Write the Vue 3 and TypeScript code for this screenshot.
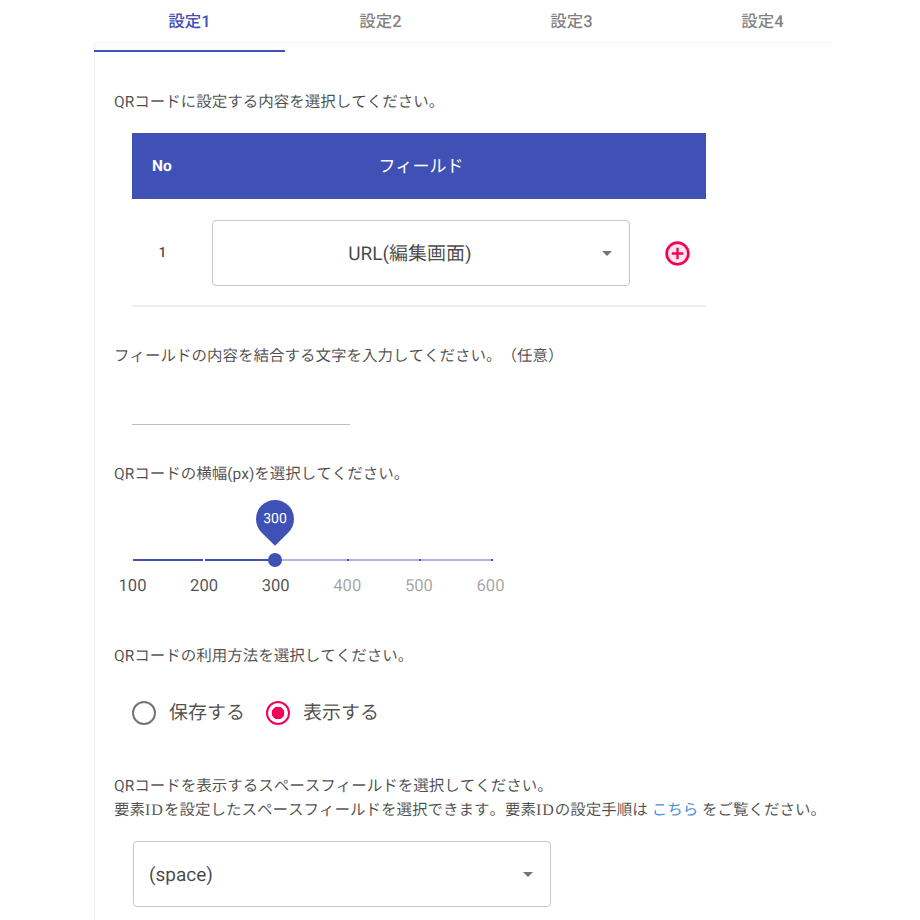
<script setup lang="ts">
const tabs = ['設定1', '設定2', '設定3', '設定4']
const ticks = [
  { label: '100', on: true },
  { label: '200', on: true },
  { label: '300', on: true },
  { label: '400', on: false },
  { label: '500', on: false },
  { label: '600', on: false },
]
</script>

<template>
  <div class="page">
    <div class="tabs">
      <div v-for="(t, i) in tabs" :key="t" class="tab" :class="{ active: i === 0 }">{{ t }}</div>
    </div>
    <div class="card">
      <p class="label first">QRコードに設定する内容を選択してください。</p>
      <div class="table">
        <div class="thead">
          <div class="th-no">No</div>
          <div class="th-field">フィールド</div>
        </div>
        <div class="trow">
          <div class="td-no">1</div>
          <div class="select center">
            <span>URL(編集画面)</span>
            <i class="caret"></i>
          </div>
          <svg class="plus" viewBox="0 0 24 24" width="25" height="25">
            <circle cx="12" cy="12" r="10.4" fill="#fde6ee" stroke="#f50057" stroke-width="2.6" />
            <path d="M12 6.5v11M6.5 12h11" stroke="#f50057" stroke-width="2.2" fill="none" />
          </svg>
        </div>
      </div>
      <p class="label l2">フィールドの内容を結合する文字を入力してください。（任意）</p>
      <div class="input"></div>
      <p class="label l3">QRコードの横幅(px)を選択してください。</p>
      <div class="slider">
        <div class="rail">
          <div class="rail-on"></div>
          <i v-for="n in 6" :key="n" class="tick" :class="{ gap: n <= 3 }" :style="{ left: (n - 1) * 20 + '%' }"></i>
          <div class="thumb"></div>
          <div class="balloon"><span>300</span></div>
        </div>
        <div class="marks">
          <span v-for="m in ticks" :key="m.label" class="mark" :class="{ on: m.on }"><span>{{ m.label }}</span></span>
        </div>
      </div>
      <p class="label l4">QRコードの利用方法を選択してください。</p>
      <div class="radios">
        <div class="radio"><i class="dot"></i><span>保存する</span></div>
        <div class="radio checked"><i class="dot"></i><span>表示する</span></div>
      </div>
      <p class="label l5">
        QRコードを表示するスペースフィールドを選択してください。<br />
        要素<span class="id">ID</span>を設定したスペースフィールドを選択できます。要素<span class="id">ID</span>の設定手順は <a class="link">こちら</a> をご覧ください。
      </p>
      <div class="select space">
        <span>(space)</span>
        <i class="caret"></i>
      </div>
    </div>
  </div>
</template>

<style>
html, body { margin: 0; background: #fff; }
</style>

<style scoped>
.page {
  width: 920px;
  height: 920px;
  overflow: hidden;
  box-sizing: border-box;
  padding-left: 94px;
  background: #fff;
  font-family: Roboto, "Noto Sans CJK JP", sans-serif;
  color: rgba(0, 0, 0, 0.72);
  text-rendering: geometricPrecision;
  text-spacing-trim: space-all;
  font-kerning: none;
}
.tabs {
  position: relative;
  z-index: 1;
  display: grid;
  grid-template-columns: repeat(4, 191px);
  height: 52px;
}
.tab {
  box-sizing: border-box;
  height: 52px;
  padding-top: 13px;
  line-height: 20px;
  text-align: center;
  font-size: 16.5px;
  font-weight: 500;
  color: rgba(0, 0, 0, 0.5);
}
.tab.active {
  color: #3f51b5;
  border-bottom: 2px solid #3f51b5;
}
.card {
  box-sizing: border-box;
  width: 739px;
  height: 900px;
  margin-top: -10px;
  padding: 10px 0 0 19px;
  border-top: 1px solid #f4f4f4;
  border-left: 1px solid #eee;
  border-top-left-radius: 4px;
}
.label {
  margin: 0;
  font-size: 15.5px;
  line-height: 24px;
  color: rgba(0, 0, 0, 0.7);
  white-space: nowrap;
}
.id {
  font-family: "Liberation Serif", serif;
  font-size: 16px;
  line-height: 0;
  letter-spacing: 1px;
}
.first { margin-top: 37px; }
.table { width: 574px; margin: 19px 0 0 18px; }
.thead {
  display: flex;
  align-items: center;
  height: 66px;
  background: #3f51b5;
  color: #fff;
}
.th-no {
  width: 80px;
  box-sizing: border-box;
  padding-left: 20px;
  font-size: 15.5px;
  font-weight: 700;
}
.th-field {
  width: 418px;
  padding-bottom: 4px;
  text-align: center;
  font-size: 17px;
}
.trow {
  position: relative;
  display: flex;
  align-items: center;
  height: 108px;
  box-sizing: border-box;
  padding-top: 2px;
  border-bottom: 2px solid #eee;
}
.td-no {
  width: 61px;
  text-align: center;
  font-size: 14px;
  font-weight: 500;
  margin-right: 19px;
  margin-top: -1px;
}
.select {
  box-sizing: border-box;
  position: relative;
  display: flex;
  align-items: center;
  width: 418px;
  height: 66px;
  border: 1px solid #c8c8c8;
  border-radius: 4px;
  background: #fff;
  font-size: 19px;
  color: rgba(0, 0, 0, 0.72);
}
.select.center { justify-content: center; padding-right: 22px; padding-bottom: 2px; }
.caret {
  position: absolute;
  right: 17px;
  top: 50%;
  margin-top: -2px;
  width: 0;
  height: 0;
  border-left: 5.5px solid transparent;
  border-right: 5.5px solid transparent;
  border-top: 5.5px solid #757575;
}
.plus { margin-left: 35px; }
.l2 { margin-top: 37px; }
.input {
  width: 218px;
  height: 57px;
  margin-left: 18px;
  box-sizing: border-box;
  border-bottom: 1.5px solid #bdbdbd;
}
.l3 { margin-top: 37px; }
.slider {
  width: 360px;
  margin: 0;
  padding: 73px 0 0 18.5px;
}
.rail {
  position: relative;
  width: 359px;
  height: 2px;
  background: #b2b9e1;
}
.rail-on {
  position: absolute;
  left: 0;
  top: 0;
  width: 39.8%;
  height: 2px;
  background: #3f51b5;
}
.tick {
  position: absolute;
  top: 0;
  width: 2px;
  height: 2px;
  margin-left: -1px;
  background: #3f51b5;
}
.tick.gap { background: #fff; width: 1.5px; }
.tick.gap:first-of-type { display: none; }
.thumb {
  position: absolute;
  left: 39.8%;
  top: 1px;
  width: 14px;
  height: 14px;
  margin: -7px 0 0 -7px;
  border-radius: 50%;
  background: #3f51b5;
}
.balloon {
  position: absolute;
  left: 39.8%;
  top: -59px;
  width: 38px;
  height: 38px;
  margin-left: -19px;
  border-radius: 50% 50% 0 50%;
  background: #3f51b5;
  transform: rotate(45deg);
}
.balloon span {
  display: block;
  transform: rotate(-45deg);
  color: #fff;
  font-size: 14px;
  font-weight: 400;
  line-height: 38px;
  text-align: center;
}
.marks {
  position: relative;
  display: flex;
  width: 358px;
  height: 24px;
  margin-top: 14px;
  justify-content: space-between;
}
.mark {
  width: 0;
  display: flex;
  justify-content: center;
  font-size: 16.6px;
  line-height: 24px;
  color: rgba(0, 0, 0, 0.38);
}
.mark.on { color: rgba(0, 0, 0, 0.7); }
.l4 { margin-top: 45px; }
.radios {
  display: flex;
  gap: 21px;
  align-items: center;
  height: 24px;
  margin: 33px 0 0 18px;
}
.radio {
  display: flex;
  align-items: center;
  gap: 13px;
  font-size: 19px;
  line-height: 24px;
  color: rgba(0, 0, 0, 0.7);
}
.dot {
  box-sizing: border-box;
  display: block;
  width: 24px;
  height: 24px;
  border: 2px solid #757575;
  border-radius: 50%;
}
.radio.checked .dot {
  border-color: #f50057;
  background: radial-gradient(circle, #f50057 0 6px, transparent 6.6px);
}
.l5 { margin-top: 49px; }
.link { color: #4a90d9; }
.select.space {
  margin: 19px 0 0 19px;
  padding-left: 15px;
  height: 66px;
  width: 418px;
}
</style>
